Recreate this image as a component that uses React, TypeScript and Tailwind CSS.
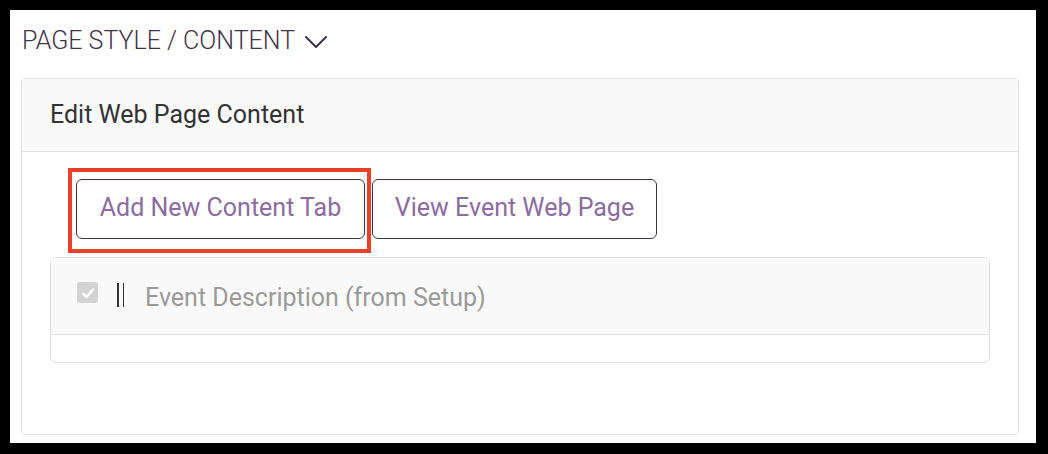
import React from 'react';

const ChevronDown = () => (
  <svg width="24" height="14" viewBox="0 0 24 14" fill="none" className="ml-[9px] mt-[2px]">
    <polyline points="2,2 12,12 22,2" stroke="#3f3249" strokeWidth="2" strokeLinecap="round" strokeLinejoin="round" />
  </svg>
);

const CheckedBox = () => (
  <span className="flex h-[21px] w-[21px] items-center justify-center rounded-[3px] bg-[#d3d3d3]">
    <svg width="14" height="12" viewBox="0 0 14 12" fill="none">
      <polyline points="2,6.5 5.5,10 12,2.5" stroke="#ffffff" strokeWidth="2.4" strokeLinecap="round" strokeLinejoin="round" />
    </svg>
  </span>
);

export default function App() {
  return (
    <div className="flex h-[454px] w-[1048px] bg-black pt-[10px] pl-[10px] pr-[12px] pb-[11px] font-['Roboto',sans-serif]">
      <div className="flex flex-1 flex-col bg-white">
        {/* Section heading */}
        <div className="flex items-center pl-[12px] pt-[17px] text-[25px] leading-[28px] font-light text-[#3f3249]">
          <span>PAGE STYLE / CONTENT</span>
          <ChevronDown />
        </div>

        {/* Card */}
        <div className="mt-[23px] mb-[8px] ml-[11px] mr-[17px] flex flex-1 flex-col rounded-[4px] border border-[#dedede]">
          <div className="border-b border-[#e2e2e2] bg-[#f9f9f9] px-[28px] pt-[19px] pb-[20px] text-[25px] leading-[33px] text-[#333333]">
            Edit Web Page Content
          </div>

          <div className="px-[28px] pt-[16px]">
            <div className="flex items-start pl-[18px]">
              <div className="border-4 border-[#e8412a] pt-[7px] pb-[10px] pl-[4px] pr-[2px]">
                <button className="h-[60px] w-[289px] rounded-[6px] border border-[#3d3049] bg-white pb-[3px] text-[25px] text-[#8c6c9f]">
                  Add New Content Tab
                </button>
              </div>
              <button className="mt-[11px] ml-[1px] h-[60px] w-[285px] rounded-[6px] border border-[#3d3049] bg-white pb-[3px] text-[25px] text-[#8c6c9f]">
                View Event Web Page
              </button>
            </div>

            {/* Content tab list */}
            <div className="mt-[4px] rounded-[6px] border border-[#dedede]">
              <div className="flex h-[77px] items-start border-b border-[#e2e2e2] bg-[#f9f9f9] pl-[26px] pt-[24px]">
                <CheckedBox />
                <span className="ml-[19px] mt-[1px] flex h-[24px] gap-[4px]">
                  <span className="w-[1.5px] bg-[#333333]" />
                  <span className="w-[1.5px] bg-[#333333]" />
                </span>
                <span className="ml-[21px] mt-[1px] text-[25px] leading-[30px] text-[#9a9a9a]">
                  Event Description (from Setup)
                </span>
              </div>
              <div className="h-[27px]" />
            </div>
          </div>
        </div>
      </div>
    </div>
  );
}
